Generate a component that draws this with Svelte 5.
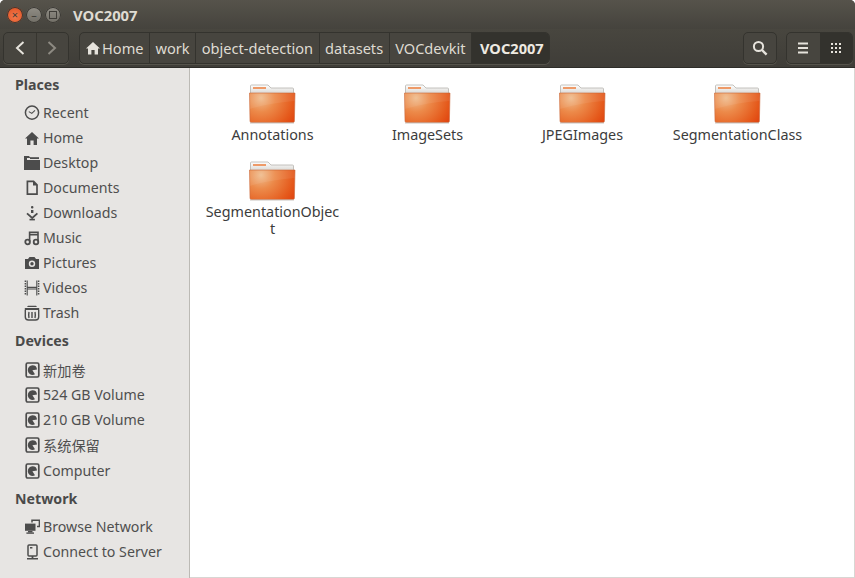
<script>
  const places = [
    ['clock', 'Recent'], ['home', 'Home'], ['desktop', 'Desktop'], ['doc', 'Documents'],
    ['down', 'Downloads'], ['music', 'Music'], ['camera', 'Pictures'], ['film', 'Videos'], ['trash', 'Trash']
  ];
  const devices = ['新加卷', '524 GB Volume', '210 GB Volume', '系统保留', 'Computer'];
  const crumbs = ['work', 'object-detection', 'datasets', 'VOCdevkit'];
  const folders = ['Annotations', 'ImageSets', 'JPEGImages', 'SegmentationClass', 'SegmentationObject'];
</script>

{#snippet homeIcon(c)}
  <svg width="16" height="16" viewBox="0 0 16 16"><path fill={c} d="M8 2 L15 8.6 H13 V14.5 H9.6 V10 H6.4 V14.5 H3 V8.6 H1 Z"/></svg>
{/snippet}

{#snippet icon(n)}
  <svg width="16" height="16" viewBox="0 0 16 16" class="ic">
    {#if n === 'clock'}
      <circle cx="8" cy="7.6" r="6.6" fill="none" stroke="#4c4c4c" stroke-width="1.5"/><path d="M4.8 6.6 L7.8 8.4 L11 5.4" fill="none" stroke="#4c4c4c" stroke-width="1.1"/>
    {:else if n === 'home'}
      <path fill="#4c4c4c" d="M8 2 L15 8.6 H13 V15 H9.6 V10.5 H6.4 V15 H3 V8.6 H1 Z"/>
    {:else if n === 'desktop'}
      <path fill="#4c4c4c" d="M0 1 H5 L6.5 3 H3 V5 H16 V15 H0 Z"/><path fill="#4c4c4c" d="M6 2.2 H15 V4 H6 Z"/>
    {:else if n === 'doc'}
      <path fill="none" stroke="#4c4c4c" stroke-width="1.7" d="M3.4 1.4 H9.6 L13 4.8 V14.2 H3.4 Z"/><path fill="#4c4c4c" d="M9 1 L13.5 5.5 H9 Z"/>
    {:else if n === 'down'}
      <rect x="7" y="1" width="2.4" height="2.4" rx="1" fill="#4c4c4c"/><rect x="7" y="5" width="2.4" height="3" fill="#4c4c4c"/>
      <path d="M3 8.4 L8.2 13 L13.4 8.4" fill="none" stroke="#4c4c4c" stroke-width="1.8"/><rect x="5.5" y="13.8" width="5.4" height="1.6" fill="#4c4c4c"/>
    {:else if n === 'music'}
      <path fill="none" stroke="#4c4c4c" stroke-width="1.6" d="M5.6 11.5 V2.2 H14 V11.5 M5.6 4.6 H14"/>
      <circle cx="3.6" cy="12" r="2.3" fill="none" stroke="#4c4c4c" stroke-width="1.8"/><circle cx="12" cy="12" r="2.3" fill="none" stroke="#4c4c4c" stroke-width="1.8"/>
    {:else if n === 'camera'}
      <path fill="#4c4c4c" fill-rule="evenodd" d="M1 4 H4 L5.5 2 H10.5 L12 4 H15 V14 H1 Z M8 5.6 A3.2 3.2 0 1 0 8 12 A3.2 3.2 0 1 0 8 5.6 Z"/><circle cx="8" cy="8.8" r="1.7" fill="#4c4c4c"/>
    {:else if n === 'film'}
      <path fill="none" stroke="#4c4c4c" stroke-width="1.1" d="M3.2 0.5 V15.5 M12.8 0.5 V15.5 M3.2 7.4 H12.8 M3.2 9 H12.8"/>
      <path stroke="#4c4c4c" stroke-width="1.5" stroke-dasharray="1.5 1" fill="none" d="M1.4 0.5 V15.5 M14.6 0.5 V15.5"/>
    {:else if n === 'trash'}
      <path fill="none" stroke="#4c4c4c" stroke-width="1.4" d="M1.3 5 V12 Q1.3 15 4.5 15 H11.5 Q14.7 15 14.7 12 V5 M5 7 Q4.4 10 5 13 M8 7 V13 M11 7 Q11.6 10 11 13"/>
      <path fill="#4c4c4c" d="M4 0.8 H12 L13 2 H3 Z M0.8 3 H15.2 V5 H0.8 Z"/>
    {:else if n === 'disk'}
      <rect x="2.2" y="1" width="12.6" height="14" rx="1.4" fill="none" stroke="#4c4c4c" stroke-width="1.7"/>
      <path fill="#4c4c4c" d="M8.4 3.2 A4.6 4.6 0 0 1 13 7.6 L8.4 8.2 L11 12.2 L9 13 A4.9 4.9 0 0 1 8.4 3.2 Z"/>
    {:else if n === 'net'}
      <rect x="1" y="4.6" width="10.5" height="7.2" fill="#4c4c4c"/><rect x="4" y="12" width="4.5" height="1.5" fill="#4c4c4c"/><rect x="2.4" y="13.4" width="7.6" height="1.4" fill="#4c4c4c"/>
      <path fill="none" stroke="#4c4c4c" stroke-width="1.5" d="M8 3.4 V1.2 H15.4 V7.6 H13"/>
    {:else if n === 'server'}
      <rect x="4" y="1" width="9" height="11" rx="1" fill="none" stroke="#4c4c4c" stroke-width="1.5"/><rect x="6" y="3" width="2.4" height="1.5" fill="#4c4c4c"/>
      <path fill="#4c4c4c" d="M7.6 12 H9.4 V14 H14 V15.5 H3 V14 H7.6 Z"/>
    {/if}
  </svg>
{/snippet}

{#snippet folder()}
  <svg class="folder" width="48" height="40" viewBox="0 0 48 40">
    <defs>
      <radialGradient id="fg" gradientUnits="userSpaceOnUse" cx="13" cy="14" r="40">
        <stop offset="0" stop-color="#efbd8f"/><stop offset="0.35" stop-color="#ec8a4a"/><stop offset="0.8" stop-color="#e55a1c"/><stop offset="1" stop-color="#e04510"/>
      </radialGradient>
      <linearGradient id="ft" x1="0" y1="0" x2="0" y2="1"><stop offset="0" stop-color="#fff"/><stop offset="1" stop-color="#d8d6d2"/></linearGradient>
    </defs>
    <path d="M2.5 2 Q2.5 1 3.5 1 H20 L23 4 H44.5 Q45.5 4 45.5 5 V10 H2.5 Z" fill="url(#ft)" stroke="#b5b2ad" stroke-width="0.8"/>
    <rect x="5" y="3" width="13" height="2" fill="#ee9a68"/>
    <path d="M1.5 9 H47 L46.4 37 Q46.4 38.5 45 38.5 H3.5 Q2 38.5 2 37 Z" fill="url(#fg)" stroke="#c9683a" stroke-width="0.6"/>
    <path d="M1.8 9.4 H46.7 V17 Q24 18.5 2 25 Z" fill="#fff" opacity="0.07"/>
    <path d="M2 38.4 H46 V39.4 H2 Z" fill="#b9b4ae" opacity="0.8"/>
  </svg>
{/snippet}

<div class="win">
  <header class="head">
    <div class="title">
      <div class="wb">
        <span class="dot close">×</span>
        <span class="dot grey">–</span>
        <span class="dot grey"><i></i></span>
      </div>
      <span class="wt">VOC2007</span>
    </div>
    <div class="tools">
      <div class="group nav">
        <button class="tb back" aria-label="Back"><svg width="12" height="16" viewBox="0 0 12 16"><path d="M9.5 2 L3 8 L9.5 14" fill="none" stroke="#e6e3dc" stroke-width="2"/></svg></button>
        <button class="tb fwd" aria-label="Forward"><svg width="12" height="16" viewBox="0 0 12 16"><path d="M2.5 2 L9 8 L2.5 14" fill="none" stroke="#8d8a82" stroke-width="2"/></svg></button>
      </div>
      <div class="group path">
        <button class="crumb homec">{@render homeIcon('#e6e3dc')}Home</button>
        {#each crumbs as c}<button class="crumb">{c}</button>{/each}
        <button class="crumb cur">VOC2007</button>
      </div>
      <div class="spacer"></div>
      <button class="group tb single" aria-label="Search"><svg width="18" height="18" viewBox="0 0 18 18"><circle cx="7.5" cy="7.5" r="4.6" fill="none" stroke="#e6e3dc" stroke-width="2"/><path d="M11 11 L15.6 15.6" stroke="#e6e3dc" stroke-width="2.4"/></svg></button>
      <div class="group views">
        <button class="tb list" aria-label="List"><svg width="12" height="12" viewBox="0 0 12 12"><path d="M1 1.5 H11 M1 6 H11 M1 10.5 H11" stroke="#e6e3dc" stroke-width="2"/></svg></button>
        <button class="tb grid" aria-label="Grid"><svg width="12" height="12" viewBox="0 0 12 12" fill="#e6e3dc">{#each [0,1,2] as r}{#each [0,1,2] as c}<rect x={1 + c * 4} y={1 + r * 4} width="2" height="2"/>{/each}{/each}</svg></button>
      </div>
    </div>
  </header>

  <div class="body">
    <aside class="side">
      <h3 class="first">Places</h3>
      {#each places as [n, l]}<div class="row">{@render icon(n)}<span>{l}</span></div>{/each}
      <h3 class="dev">Devices</h3>
      {#each devices as l}<div class="row" class:tall={l === '系统保留'}>{@render icon('disk')}<span>{l}</span></div>{/each}
      <h3 class="net">Network</h3>
      <div class="row">{@render icon('net')}<span>Browse Network</span></div>
      <div class="row">{@render icon('server')}<span>Connect to Server</span></div>
    </aside>
    <main class="main">
      {#each folders as f}
        <div class="item">{@render folder()}<div class="name">{f}</div></div>
      {/each}
    </main>
  </div>
</div>

<style>
  :global(body) { margin: 0; background: #fff; }
  :global(html), :global(body) { overflow: hidden; }
  .win {
    width: 855px; height: 578px; display: flex; flex-direction: column;
    font-family: "Noto Sans", "Noto Sans CJK SC", sans-serif; font-size: 14.2px;
    overflow: hidden;
  }
  .head { flex: none; background: linear-gradient(#4b4942, #403e39 45%, #3f3d38); border-bottom: 1px solid #2e2d29; height: 67px; display: flex; flex-direction: column; border-radius: 5px 5px 0 0; overflow: hidden; }
  .title { height: 29px; display: flex; align-items: center; padding-left: 7px; background: linear-gradient(#56534b, #45433d); }
  .wb { display: flex; gap: 3px; }
  .dot { width: 16px; height: 16px; border-radius: 50%; display: flex; align-items: center; justify-content: center; font-size: 11px; line-height: 1; color: #3f3d38; box-shadow: inset 0 0 0 1px #3a3833; }
  .close { background: radial-gradient(circle at 50% 60%, #f47a4c, #dc4a1c); }
  .grey { background: linear-gradient(#918e86, #716e66); }
  .grey i { width: 6px; height: 6px; border: 1px solid #3f3d38; display: block; }
  .wt { margin-left: 12px; color: #dfdbd2; font-weight: 700; font-size: 14.8px; }
  .tools { flex: 1; display: flex; align-items: center; padding: 0 2px 0 3px; background: linear-gradient(#48463f, #3f3d38); }
  .group { display: flex; height: 32px; border: 1px solid #34332e; border-radius: 5px; box-sizing: border-box; background: #47453f; overflow: hidden; box-shadow: 0 1px 0 #55534b; }
  button { font: inherit; color: inherit; background: none; border: 0; padding: 0; margin: 0; }
  .tb { display: flex; align-items: center; justify-content: center; }
  .nav { width: 66px; }
  .back, .fwd { flex: 1; }
  .back { border-right: 1px solid #37352f; }
  .path { margin-left: 10px; color: #dfdbd2; font-size: 14.6px; }
  .crumb { display: flex; align-items: center; padding: 0 5.5px; color: #dfdbd2; border-right: 1px solid #34332e; white-space: nowrap; }
  .homec { padding-left: 5px; gap: 1px; }
  .cur { background: #33322d; font-weight: 700; border-right: 0; padding: 0 5px 0 8px; color: #eeeae2; }
  .spacer { flex: 1; }
  .single { width: 34px; }
  .views { margin-left: 9px; width: 67px; }
  .list, .grid { flex: 1; }
  .grid { background: #33322d; }
  .body { flex: 1; min-height: 0; display: flex; }
  .side { flex: none; background: #e7e5e3; border-right: 1px solid #bcbab5; color: #4f4f4f; padding-left: 15px; box-sizing: border-box; width: 190px; }
  h3 { margin: 0; font-size: 14.2px; font-weight: 700; color: #4a4a4a; height: 32px; display: flex; align-items: center; box-sizing: border-box; }
  h3.dev { padding-bottom: 2px; }
  h3.net { height: 31px; }
  .row { height: 25px; display: flex; align-items: center; padding-left: 9px; gap: 3px; }
  .tall { height: 26px; }
  .ic { flex: none; }
  .main { flex: 1; background: #fff; border-right: 1px solid #d8d6d3; border-bottom: 1px solid #d8d6d3; display: flex; flex-wrap: wrap; align-content: flex-start; padding: 16px 0 0 5px; }
  .item { width: 155px; height: 77px; display: flex; flex-direction: column; align-items: center; color: #3c3c3c; font-size: 14.35px; }
  .folder { flex: none; margin-right: 1px; }
  .name { width: 134px; text-align: center; word-break: break-all; line-height: 17px; margin-top: 2px; }
</style>
